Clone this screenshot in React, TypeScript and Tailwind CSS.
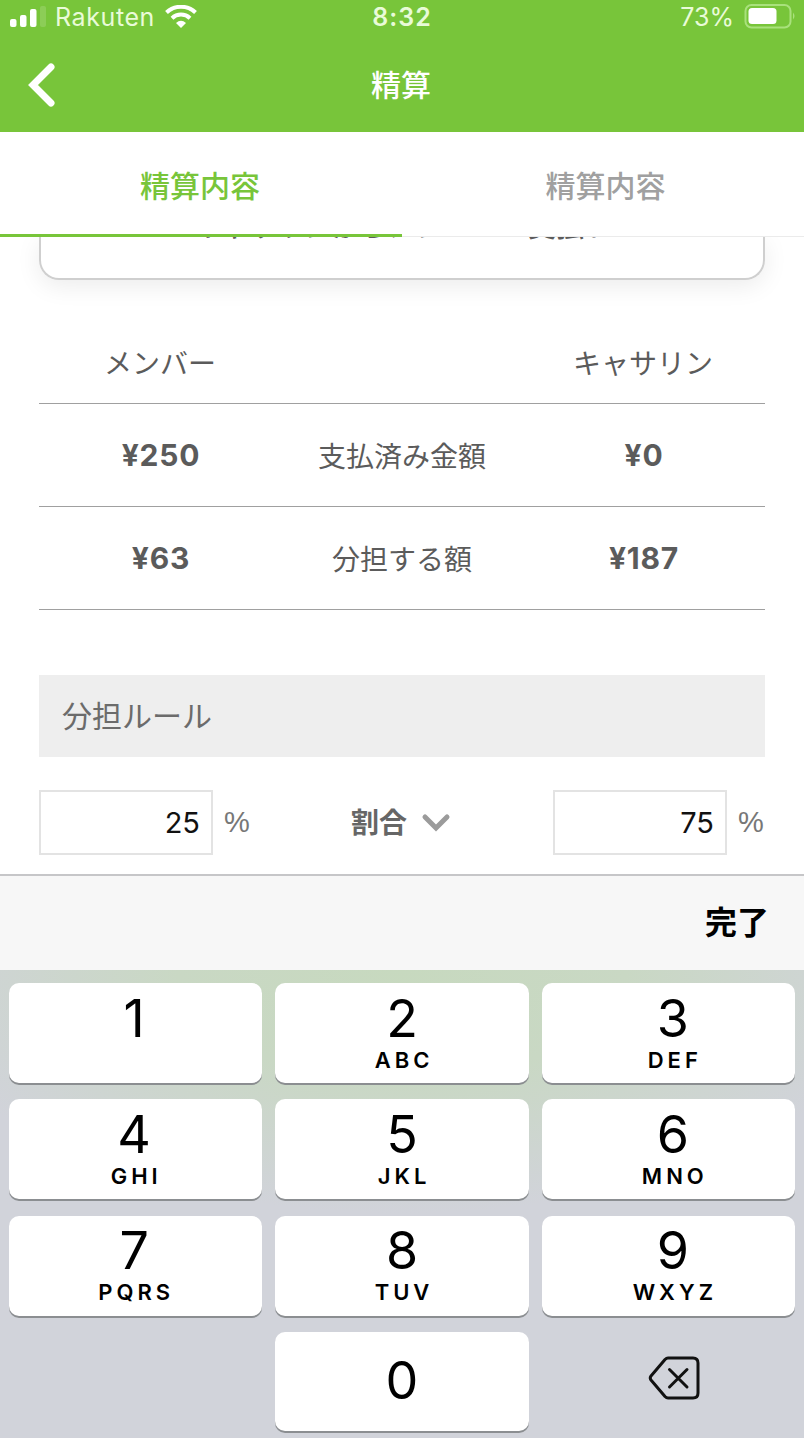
import React, { useState } from 'react'

const rows = [
  { left: '¥250', label: '支払済み金額', right: '¥0' },
  { left: '¥63', label: '分担する額', right: '¥187' },
]

const keys = [
  { digit: '1', letters: '' },
  { digit: '2', letters: 'ABC' },
  { digit: '3', letters: 'DEF' },
  { digit: '4', letters: 'GHI' },
  { digit: '5', letters: 'JKL' },
  { digit: '6', letters: 'MNO' },
  { digit: '7', letters: 'PQRS' },
  { digit: '8', letters: 'TUV' },
  { digit: '9', letters: 'WXYZ' },
]

const StatusBar = () => (
  <div className="grid h-[34px] grid-cols-3 items-center text-[25px] leading-[34px] text-[#e9fbd8]">
    <div className="flex items-center pl-[10px]">
      <svg width="36" height="24" viewBox="0 0 36 24" fill="#fff">
        <rect x="0" y="14" width="6.500" height="8" rx="2" />
        <rect x="10" y="10" width="6.500" height="12" rx="2" />
        <rect x="20" y="4" width="6.500" height="18" rx="2" />
        <rect x="30" y="1" width="6" height="21" rx="2" opacity="0.15" />
      </svg>
      <span className="ml-[9px] w-[101px] tracking-[0.6px]">Rakuten</span>
      <svg className="ml-[9px]" width="32" height="24" viewBox="0 0 32 24" fill="none" stroke="#fff" strokeWidth="4">
        <path d="M1.500 7.500C9.500 -.2 22.500 -.2 30.500 7.500" />
        <path d="M7 13.200C12 8.400 20 8.400 25 13.200" />
        <path d="M11 18Q16 13.500 21 18L16 23Z" fill="#fff" stroke="none" />
      </svg>
    </div>
    <span className="text-center font-semibold tracking-[1px]">8:32</span>
    <div className="flex items-center justify-end pr-[8px]">
      <span>73%</span>
      <svg className="ml-[10px]" width="52" height="26" viewBox="0 0 52 26">
        <rect x="1.500" y="1" width="45" height="22.500" rx="6" fill="none" stroke="#a9e17c" strokeWidth="2" />
        <rect x="4.500" y="4" width="28" height="16" rx="3.500" fill="#fff" />
        <path d="M49 8.500Q52 12 49 15.500Z" fill="#a9e17c" />
      </svg>
    </div>
  </div>
)

const Header = () => (
  <header className="h-[132px] bg-[#78c53a]">
    <StatusBar />
    <div className="grid h-[98px] grid-cols-3 items-center pt-1">
      <button className="ml-[28px] w-fit" aria-label="戻る">
        <svg width="28" height="44" viewBox="0 0 28 44" fill="none" stroke="#fff" strokeWidth="7" strokeLinecap="round" strokeLinejoin="miter">
          <path d="M23 4L5 22L23 40" />
        </svg>
      </button>
      <h1 className="pr-[2px] text-center text-[30px] font-medium text-white">精算</h1>
    </div>
  </header>
)

const Tabs = () => {
  const [active, setActive] = useState(0)
  return (
    <nav className="grid h-[105px] grid-cols-2 text-[30px] font-medium">
      {['精算内容', '精算内容'].map((name, i) => (
        <button
          key={i}
          onClick={() => setActive(i)}
          className={
            active === i
              ? 'border-b-[3px] border-[#78c53a] pt-[6px] pr-[2px] text-[#78c53a]'
              : 'border-b border-[#ebebeb] pt-[4px] pl-[5px] text-[#a0a0a0]'
          }
        >
          {name}
        </button>
      ))}
    </nav>
  )
}

const PercentField = ({ initial }: { initial: string }) => {
  const [value, setValue] = useState(initial)
  return (
    <div className="flex items-center">
      <input
        className="h-[65px] w-[174px] border-2 border-[#e3e3e3] bg-white pr-[11px] text-right text-[29px] text-[#111]"
        inputMode="numeric"
        value={value}
        onChange={(e) => setValue(e.target.value)}
      />
      <span className="ml-[11px] w-[27px] font-['Liberation_Sans',sans-serif] text-[29px] text-[#777]">%</span>
    </div>
  )
}

const Keyboard = () => (
  <div className="h-[564px]">
    <div className="flex h-[96px] items-center justify-end border-t-2 border-[#c6c6c8] bg-[#f7f7f7] pr-[35px]">
      <button className="text-[32px] font-bold text-black">完了</button>
    </div>
    <div className="h-[468px] bg-[#d1d3da] bg-[radial-gradient(ellipse_62%_52%_at_50%_0%,#c7d9bf_0%,#c9d8c4_45%,#d1d3da_100%)] px-[9px] pt-[13px]">
      <div className="grid grid-cols-3 gap-x-[13px] gap-y-[16.300px]">
        {keys.map(({ digit, letters }, i) => (
          <button
            key={digit}
            className={`flex h-[100px] flex-col items-center rounded-[10px] bg-white pt-[10.500px] text-black shadow-[0_2px_0_#8b8e91] ${
              i % 3 === 2 ? 'pl-[9px]' : i % 3 === 0 ? 'pr-[3px]' : ''
            }`}
          >
            <span className="text-[52px] leading-[50px]">{digit}</span>
            <span className="mt-[5px] pl-[4px] text-[22px] leading-[22px] font-semibold tracking-[4px]">
              {letters}
            </span>
          </button>
        ))}
        <button className="col-start-2 h-[99px] rounded-[10px] bg-white text-[52px] text-black shadow-[0_2px_0_#8b8e91]">
          0
        </button>
        <button className="flex items-center justify-center pb-[6px]" aria-label="削除">
          <svg className="ml-[12px]" width="52" height="44" viewBox="0 0 52 44" fill="none" stroke="#111" strokeWidth="3" strokeLinecap="round" strokeLinejoin="round">
            <path d="M20 2H45Q50 2 50 7V37Q50 42 45 42H20Q18.500 42 17 40.500L3 24Q1.500 22 3 20L17 3.500Q18.500 2 20 2Z" />
            <path d="M21.500 13.500L39 31M39 13.500L21.500 31" />
          </svg>
        </button>
      </div>
    </div>
  </div>
)

const App = () => (
  <div className="h-[1438px] w-[804px] overflow-hidden bg-white font-['Inter','Noto_Sans_CJK_JP',sans-serif] text-[28px] text-[#5b5b5b]">
    <Header />
    <Tabs />
    <main className="h-[637px] overflow-hidden px-[39px]">
      {/* result card, scrolled up behind the tabs */}
      <div className="flex h-[43px] items-end justify-center rounded-b-[20px] border-2 border-t-0 border-[#cfcfcf] shadow-[0_6px_24px_rgba(0,0,0,0.08)]">
        <div className="h-full overflow-hidden">
          <p className="-mt-[30px] leading-[40px] font-medium">キャサリンからメンバーへ支払い</p>
        </div>
      </div>
      <div className="mt-[42px] grid h-[82px] grid-cols-3 items-center border-b border-[#a0a0a0] pt-[3px] text-center">
        <span>メンバー</span>
        <span className="col-start-3 pr-[2px]">キャサリン</span>
      </div>
      {rows.map(({ left, label, right }) => (
        <div key={label} className="grid h-[103px] grid-cols-3 items-center border-b border-[#a0a0a0] pt-px text-center">
          <span className="pl-[2px] text-[30px] font-bold tracking-[0.8px]">{left}</span>
          <span className="pt-[2px]">{label}</span>
          <span className="text-[30px] font-bold tracking-[0.8px]">{right}</span>
        </div>
      ))}
      <h2 className="mt-[65px] flex h-[82px] items-center bg-[#eee] pt-px pl-[23px] text-[30px] text-[#6b6b6b]">
        分担ルール
      </h2>
      <div className="mt-[33px] flex items-center justify-between">
        <PercentField initial="25" />
        <button className="flex items-center pr-[2px] font-bold text-[#666]">
          割合
          <svg className="ml-[14px]" width="30" height="20" viewBox="0 0 30 20" fill="none" stroke="#9b9b9b" strokeWidth="5" strokeLinecap="round">
            <path d="M4 4L15 15L26 4" />
          </svg>
        </button>
        <PercentField initial="75" />
      </div>
    </main>
    <Keyboard />
  </div>
)

export default App
